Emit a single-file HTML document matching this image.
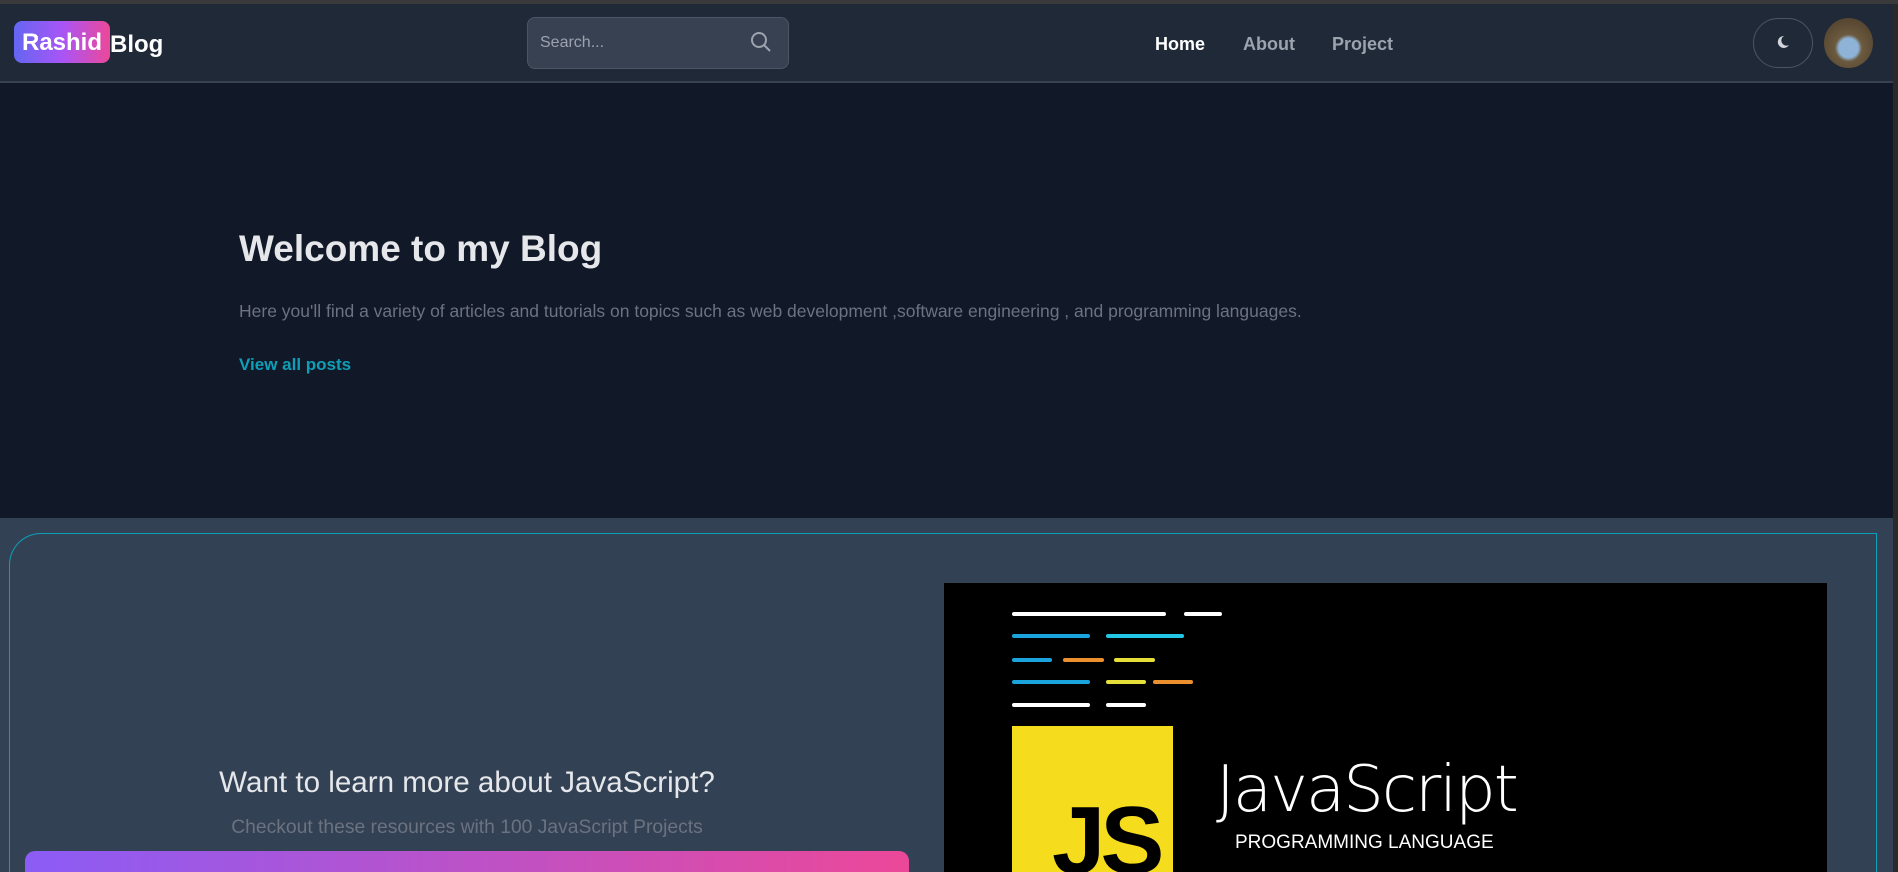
<!DOCTYPE html>
<html style="overflow:hidden;height:872px"><head><meta charset="utf-8"><style>
*{box-sizing:border-box;margin:0;padding:0}
html,body{overflow:hidden}
body{width:1898px;height:872px;background:#334155;font-family:"Liberation Sans",sans-serif;position:relative}
.abs{position:absolute}
</style></head><body>
<div class="abs" style="left:0;top:0;width:1898px;height:4px;background:#3a3a3a"></div>
<div class="abs" style="left:0;top:4px;width:1898px;height:77px;background:#1f2937"></div>
<div class="abs" style="left:0;top:81px;width:1898px;height:2px;background:#374151"></div>
<div class="abs" style="left:14px;top:21px;width:96px;height:42px;border-radius:8px;background:linear-gradient(90deg,#6366f1,#a855f7,#ec4899);color:#fff;font-size:24px;font-weight:bold;line-height:44px;text-align:center">Rashid</div>
<div class="abs" style="left:110px;top:22px;color:#fff;font-size:24px;font-weight:bold;line-height:46px">Blog</div>
<div class="abs" style="left:527px;top:17px;width:262px;height:52px;border:1px solid #4b5563;border-radius:8px;background:#374151"></div>
<div class="abs" style="left:540px;top:30px;color:#9ca3af;font-size:16px;line-height:26px">Search...</div>
<svg class="abs" style="left:749px;top:30px" width="24" height="24" viewBox="0 0 24 24" fill="none" stroke="#9ca3af" stroke-width="2"><circle cx="10" cy="10" r="7"/><path d="M15 15l6 6"/></svg>
<div class="abs" style="left:1155px;top:34px;color:#fff;font-size:18px;font-weight:bold">Home</div>
<div class="abs" style="left:1243px;top:34px;color:#9ca3af;font-size:18px;font-weight:bold">About</div>
<div class="abs" style="left:1332px;top:34px;color:#9ca3af;font-size:18px;font-weight:bold">Project</div>
<div class="abs" style="left:1753px;top:18px;width:60px;height:50px;border:1px solid #4b5563;border-radius:25px"></div>
<svg class="abs" style="left:1775px;top:34px" width="16" height="16" viewBox="0 0 16 16"><path d="M9 2a6 6 0 1 0 5 9a5 5 0 0 1-5-9z" fill="#d1d5db"/></svg>
<div class="abs" style="left:1824px;top:18px;width:49px;height:50px;border-radius:50%;background:radial-gradient(circle at 50% 60%,#8fb3d6 0 25%,#6b5a3e 35%,#4a3a28 100%)"></div>
<div class="abs" style="left:1893px;top:4px;width:5px;height:868px;background:#2a2a2a"></div>
<div class="abs" style="left:0;top:83px;width:1893px;height:435px;background:#111827"></div>
<div class="abs" style="left:239px;top:228px;color:#e5e7eb;font-size:37px;font-weight:bold">Welcome to my Blog</div>
<div class="abs" style="left:239px;top:301px;color:#6b7280;font-size:17.5px">Here you'll find a variety of articles and tutorials on topics such as web development ,software engineering , and programming languages.</div>
<div class="abs" style="left:239px;top:355px;color:#0e9fb8;font-size:17px;font-weight:bold">View all posts</div>
<div class="abs" style="left:9px;top:533px;width:1868px;height:339px;border:1px solid #0e9fb8;border-bottom:none;border-radius:32px 0 0 0"></div>
<div class="abs" style="left:0;top:766px;width:934px;text-align:center;color:#e5e7eb;font-size:29.6px">Want to learn more about JavaScript?</div>
<div class="abs" style="left:0;top:817px;width:934px;text-align:center;color:#6b7280;font-size:19.3px">Checkout these resources with 100 JavaScript Projects</div>
<div class="abs" style="left:25px;top:851px;width:884px;height:21px;border-radius:10px 10px 0 0;background:linear-gradient(90deg,#8b5cf6,#ec4899)"></div>
<div class="abs" style="left:944px;top:583px;width:883px;height:289px;background:#000;overflow:hidden">
<svg width="883" height="300" style="position:absolute;left:0;top:0">
<g stroke-width="4" stroke-linecap="round">
<path d="M70 31H220M242 31H276" stroke="#fff"/>
<path d="M70 53H144" stroke="#1aa3dc"/><path d="M164 53H238" stroke="#22c7e6"/>
<path d="M70 77H106" stroke="#1aa3dc"/><path d="M121 77H158" stroke="#ec8f2e"/><path d="M172 77H209" stroke="#e6df3a"/>
<path d="M70 99H144" stroke="#1aa3dc"/><path d="M164 99H200" stroke="#e6df3a"/><path d="M211 99H247" stroke="#ec8f2e"/>
<path d="M70 122H144M164 122H200" stroke="#fff"/>
</g>
<rect x="68" y="143" width="161" height="200" fill="#f5dd1e"/>
</svg>
<div class="abs" style="left:108px;top:205px;font-size:96px;font-weight:bold;color:#000;letter-spacing:-5px;line-height:1.1">JS</div>
<div class="abs" style="left:272px;top:170px;font-size:64px;color:#fff;font-family:'DejaVu Sans',sans-serif;font-weight:200;letter-spacing:-2px">JavaScript</div>
<div class="abs" style="left:291px;top:249px;font-size:19px;color:#fff">PROGRAMMING LANGUAGE</div>
</div>
</body></html>
